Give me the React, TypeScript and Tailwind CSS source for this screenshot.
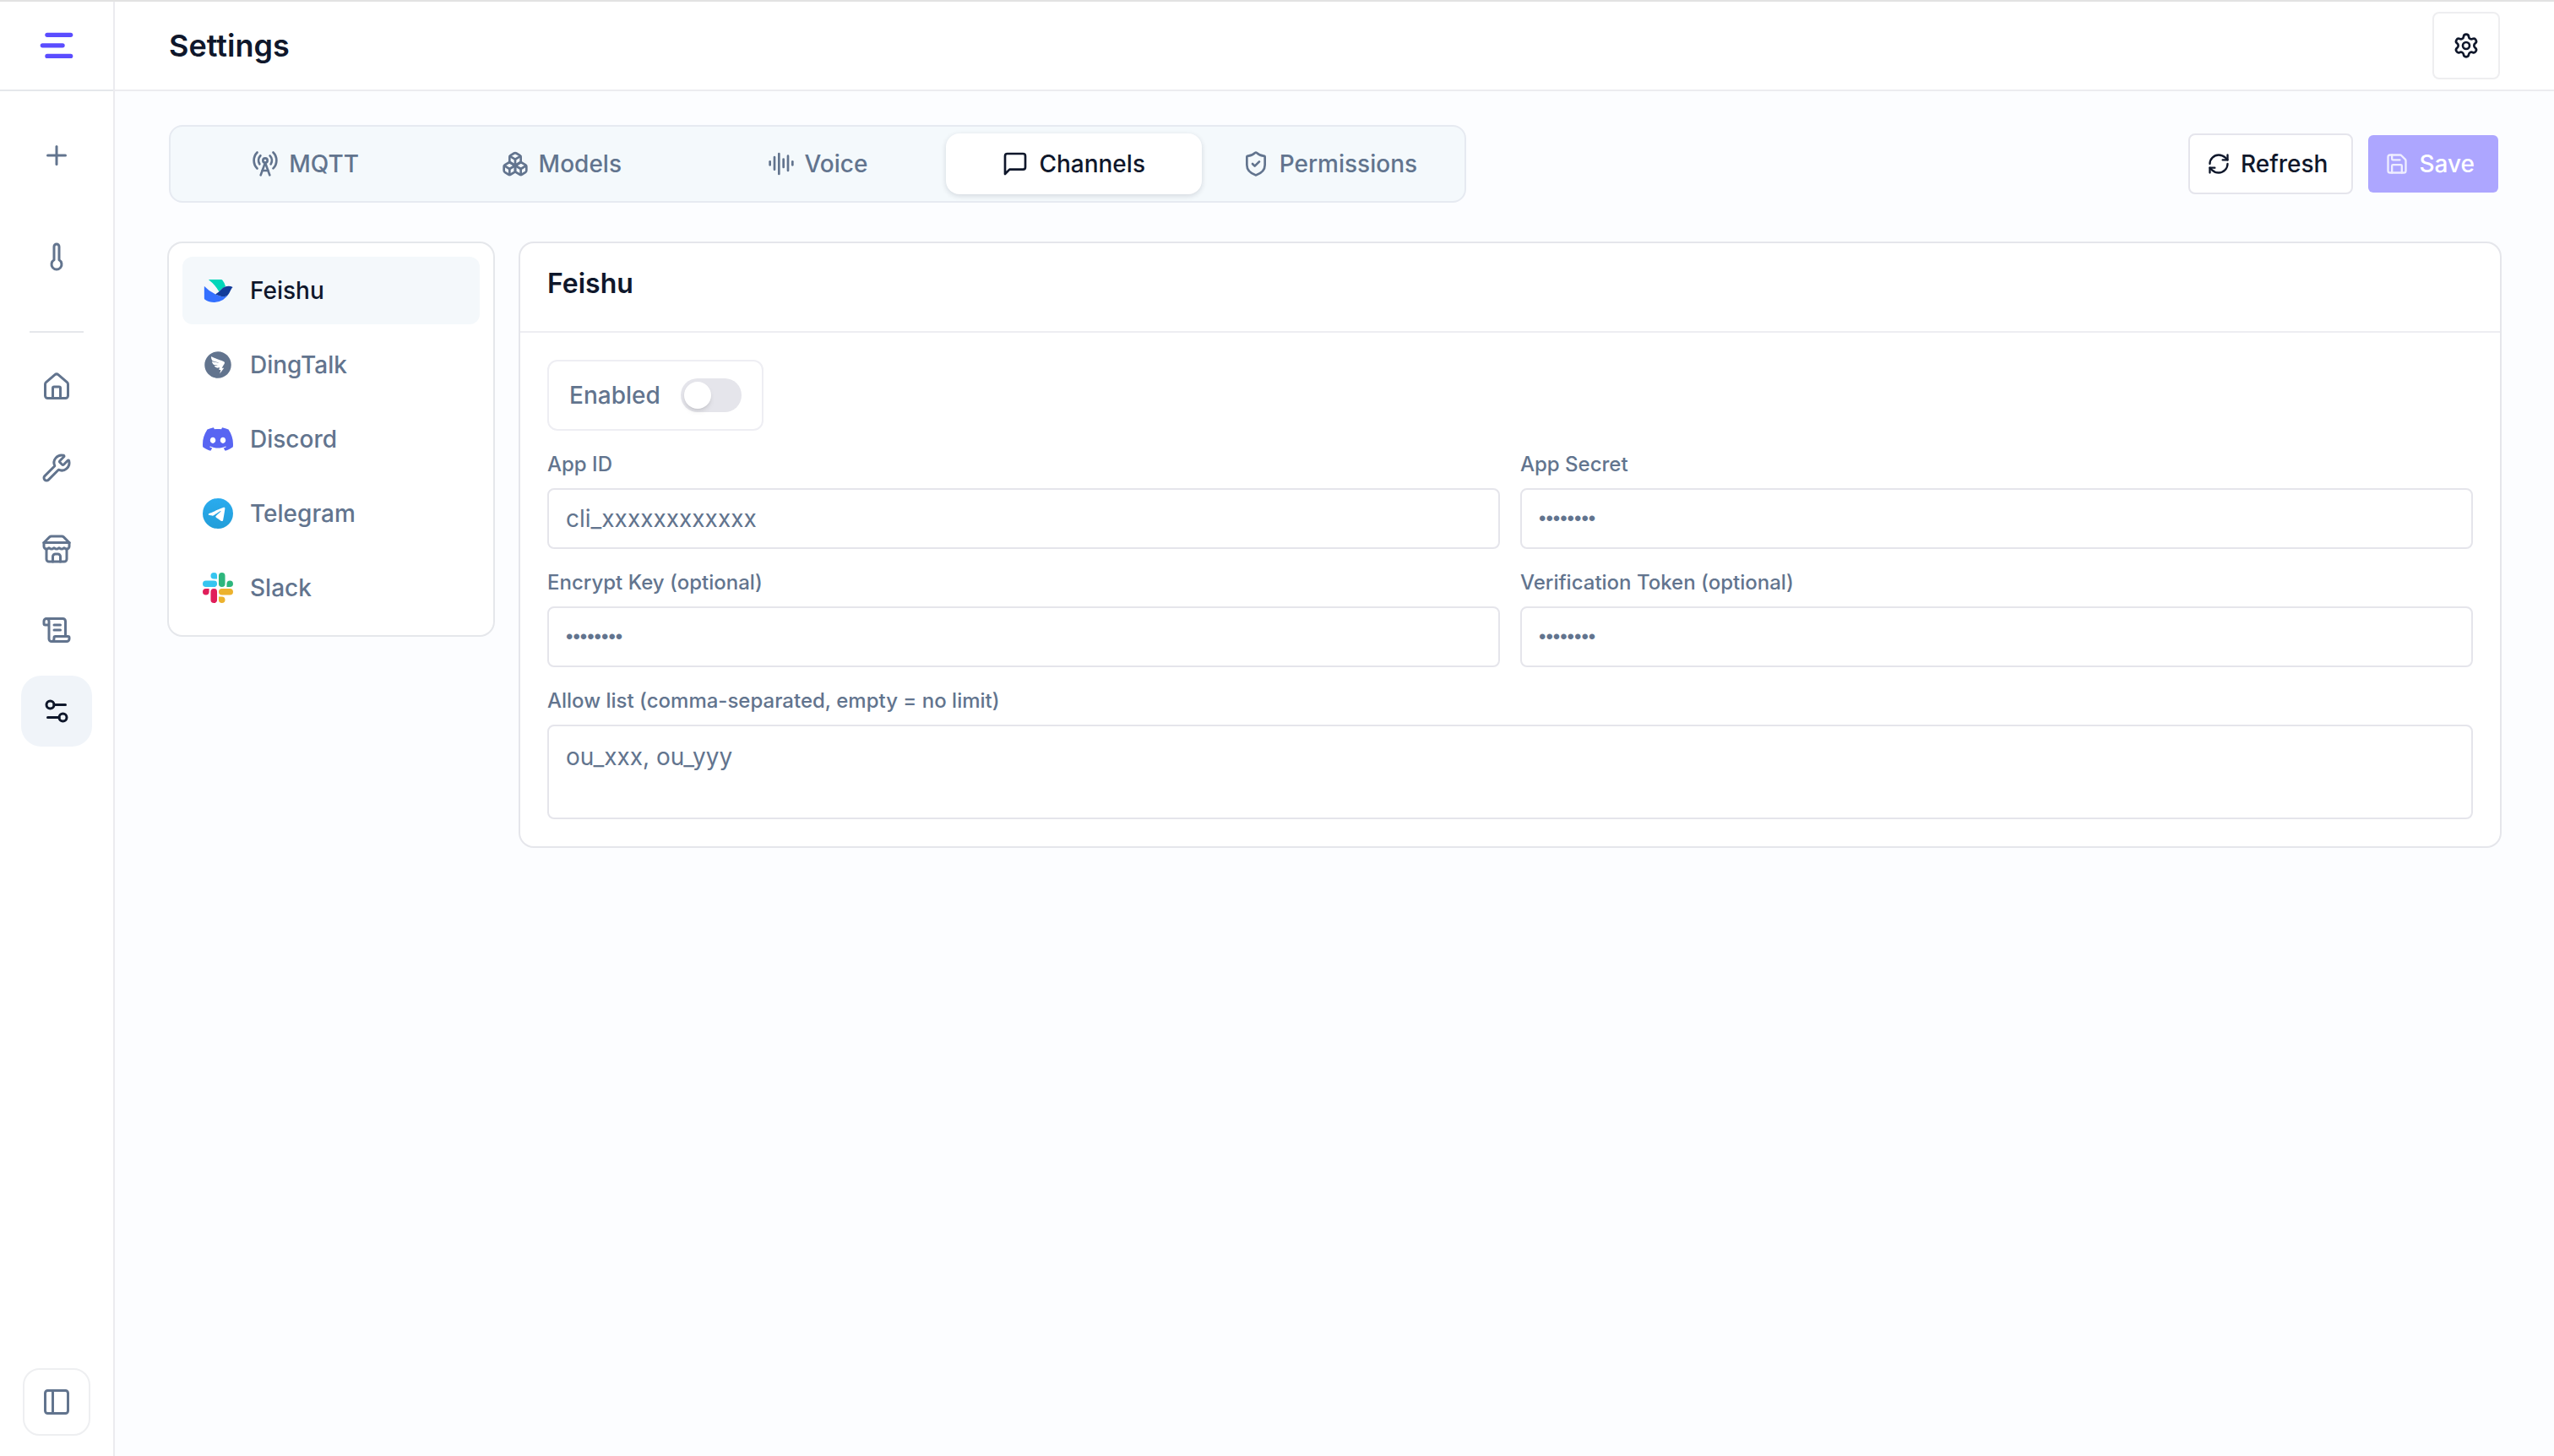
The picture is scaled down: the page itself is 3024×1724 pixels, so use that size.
import { useState } from "react"
import type { ReactNode } from "react"
import {
  AudioLines,
  Boxes,
  House,
  PanelLeft,
  Plus,
  RadioTower,
  RefreshCw,
  Save,
  ScrollText,
  Settings,
  Settings2,
  ShieldCheck,
  Thermometer,
  Wrench,
} from "lucide-react"
import { AiFillDingtalkCircle } from "react-icons/ai"
import { SiDiscord } from "react-icons/si"

const StoreIcon = () => (
  <svg
    viewBox="0 0 24 24"
    className="size-9"
    fill="none"
    stroke="currentColor"
    strokeWidth="2"
    strokeLinecap="round"
    strokeLinejoin="round"
  >
    <path d="m2 7 4.41-4.41A2 2 0 0 1 7.83 2h8.34a2 2 0 0 1 1.42.59L22 7" />
    <path d="M4 12v8a2 2 0 0 0 2 2h12a2 2 0 0 0 2-2v-8" />
    <path d="M15 22v-4a2 2 0 0 0-2-2h-2a2 2 0 0 0-2 2v4" />
    <path d="M2 7h20" />
    <path d="M22 7v3a2 2 0 0 1-2 2a2.7 2.7 0 0 1-1.59-.63.7.7 0 0 0-.82 0A2.7 2.7 0 0 1 16 12a2.7 2.7 0 0 1-1.59-.63.7.7 0 0 0-.82 0A2.7 2.7 0 0 1 12 12a2.7 2.7 0 0 1-1.59-.63.7.7 0 0 0-.82 0A2.7 2.7 0 0 1 8 12a2.7 2.7 0 0 1-1.59-.63.7.7 0 0 0-.82 0A2.7 2.7 0 0 1 4 12a2 2 0 0 1-2-2V7" />
  </svg>
)

const MessageIcon = () => (
  <svg
    viewBox="0 0 24 24"
    className="size-8"
    fill="none"
    stroke="currentColor"
    strokeWidth="2"
    strokeLinecap="round"
    strokeLinejoin="round"
  >
    <path d="M21 15a2 2 0 0 1-2 2H7l-4 4V5a2 2 0 0 1 2-2h14a2 2 0 0 1 2 2z" />
  </svg>
)

const Logo = () => (
  <svg viewBox="0 0 40 32" className="h-8 w-10" fill="#5b4dff">
    <rect x="6.3" y="0.7" width="33" height="5.2" rx="2.6" />
    <rect x="0.7" y="13.2" width="29" height="5.2" rx="2.6" />
    <rect x="6.3" y="25.8" width="33" height="5.2" rx="2.6" />
  </svg>
)

const FeishuIcon = () => (
  <svg viewBox="0 0 24 24" className="size-9">
    <path
      fill="#00D6B9"
      d="M12.924 12.803l.056-.054c.038-.034.076-.072.11-.11l.077-.076.23-.227 1.334-1.319.335-.331c.063-.063.13-.123.195-.183a7.777 7.777 0 011.823-1.24 7.607 7.607 0 011.014-.4 13.177 13.177 0 00-2.5-5.013 1.203 1.203 0 00-.94-.448h-9.65c-.173 0-.246.224-.107.325a28.23 28.23 0 018 9.098c.007-.006.016-.013.023-.022z"
    />
    <path
      fill="#3370FF"
      d="M9.097 21.299a13.258 13.258 0 0011.82-7.247 5.576 5.576 0 01-.731 1.076 5.315 5.315 0 01-.745.7 5.117 5.117 0 01-.615.404 4.626 4.626 0 01-.726.331 5.312 5.312 0 01-1.883.312 5.892 5.892 0 01-.524-.031 6.509 6.509 0 01-.729-.126c-.06-.016-.12-.029-.18-.044-.166-.044-.33-.092-.494-.14-.082-.024-.164-.046-.246-.072-.123-.038-.247-.072-.366-.11l-.3-.095-.284-.094-.192-.067c-.08-.025-.155-.053-.234-.082a3.49 3.49 0 01-.167-.06c-.11-.04-.221-.079-.328-.12-.063-.025-.126-.047-.19-.072l-.252-.098c-.088-.035-.18-.07-.268-.107l-.174-.07c-.072-.028-.141-.06-.214-.088l-.164-.07c-.057-.024-.114-.05-.17-.075l-.149-.066-.135-.06-.14-.063a90.183 90.183 0 01-.141-.066 4.808 4.808 0 00-.18-.083c-.063-.028-.123-.06-.186-.088a5.697 5.697 0 01-.199-.098 27.762 27.762 0 01-8.067-5.969.18.18 0 00-.312.123l.006 9.21c0 .4.199.779.533 1a13.177 13.177 0 007.326 2.205z"
    />
    <path
      fill="#133C9A"
      d="M23.732 9.295a7.55 7.55 0 00-3.35-.776 7.521 7.521 0 00-2.284.35c-.054.016-.107.035-.158.05a8.297 8.297 0 00-.855.35 7.14 7.14 0 00-.552.297 6.716 6.716 0 00-.533.347c-.123.089-.243.18-.363.275-.13.104-.252.211-.375.321-.067.06-.13.123-.196.184l-.334.328-1.338 1.321-.23.228-.076.075c-.038.038-.076.073-.11.11l-.057.054a1.914 1.914 0 01-.085.08c-.032.028-.063.06-.095.088a13.286 13.286 0 01-2.748 1.946c.06.028.12.057.18.082l.142.066c.044.022.091.041.139.063l.135.06.149.067.17.075.164.07c.073.031.142.06.215.088.056.025.116.047.173.07.088.034.177.072.268.107.085.031.168.066.253.098l.189.072c.11.041.218.082.328.12.057.019.11.041.167.06.08.028.155.053.234.082l.192.066.284.095.3.095c.123.037.243.075.366.11l.246.072c.164.048.331.095.495.14.06.015.12.03.18.043.114.029.227.05.34.07.13.022.26.04.389.057a5.815 5.815 0 00.994.019 5.172 5.172 0 001.413-.3 5.405 5.405 0 00.726-.334c.06-.035.122-.07.182-.108a7.96 7.96 0 00.432-.297 5.362 5.362 0 00.577-.517 5.285 5.285 0 00.37-.429 5.797 5.797 0 00.527-.827l.13-.258 1.166-2.325-.003.006a7.391 7.391 0 011.527-2.186z"
    />
  </svg>
)

const TelegramIcon = () => (
  <svg viewBox="0 0 24 24" className="size-9">
    <defs>
      <linearGradient id="telegram" x1="0" y1="0" x2="0" y2="1">
        <stop offset="0" stopColor="#2AABEE" />
        <stop offset="1" stopColor="#229ED9" />
      </linearGradient>
    </defs>
    <circle cx="12" cy="12" r="12" fill="url(#telegram)" />
    <path
      fill="#fff"
      d="M16.906 7.224c.1-.002.321.023.465.14a.506.506 0 0 1 .171.325c.016.093.036.306.02.472-.18 1.898-.962 6.502-1.36 8.627-.168.9-.499 1.201-.82 1.23-.696.065-1.225-.46-1.9-.902-1.056-.693-1.653-1.124-2.678-1.8-1.185-.78-.417-1.21.258-1.91.177-.184 3.247-2.977 3.307-3.23.007-.032.014-.15-.056-.212s-.174-.041-.249-.024c-.106.024-1.793 1.14-5.061 3.345-.48.33-.913.49-1.302.48-.428-.008-1.252-.241-1.865-.44-.752-.245-1.349-.374-1.297-.789.027-.216.325-.437.893-.663 3.498-1.524 5.83-2.529 6.998-3.014 3.332-1.386 4.025-1.627 4.476-1.635z"
    />
  </svg>
)

const SlackIcon = () => (
  <svg viewBox="0 0 24 24" className="size-9">
    <path
      fill="#E01E5A"
      d="M5.042 15.165a2.528 2.528 0 0 1-2.52 2.523A2.528 2.528 0 0 1 0 15.165a2.527 2.527 0 0 1 2.522-2.52h2.52v2.52zM6.313 15.165a2.527 2.527 0 0 1 2.521-2.52 2.527 2.527 0 0 1 2.521 2.52v6.313A2.528 2.528 0 0 1 8.834 24a2.528 2.528 0 0 1-2.521-2.522v-6.313z"
    />
    <path
      fill="#36C5F0"
      d="M8.834 5.042a2.528 2.528 0 0 1-2.521-2.52A2.528 2.528 0 0 1 8.834 0a2.528 2.528 0 0 1 2.521 2.522v2.52H8.834zM8.834 6.313a2.528 2.528 0 0 1 2.521 2.521 2.528 2.528 0 0 1-2.521 2.521H2.522A2.528 2.528 0 0 1 0 8.834a2.528 2.528 0 0 1 2.522-2.521h6.312z"
    />
    <path
      fill="#2EB67D"
      d="M18.956 8.834a2.528 2.528 0 0 1 2.522-2.521A2.528 2.528 0 0 1 24 8.834a2.528 2.528 0 0 1-2.522 2.521h-2.522V8.834zM17.688 8.834a2.528 2.528 0 0 1-2.523 2.521 2.527 2.527 0 0 1-2.52-2.521V2.522A2.527 2.527 0 0 1 15.165 0a2.528 2.528 0 0 1 2.523 2.522v6.312z"
    />
    <path
      fill="#ECB22E"
      d="M15.165 18.956a2.528 2.528 0 0 1 2.523 2.522A2.528 2.528 0 0 1 15.165 24a2.527 2.527 0 0 1-2.52-2.522v-2.522h2.52zM15.165 17.688a2.527 2.527 0 0 1-2.52-2.523 2.526 2.526 0 0 1 2.52-2.52h6.313A2.527 2.527 0 0 1 24 15.165a2.528 2.528 0 0 1-2.522 2.523h-6.313z"
    />
  </svg>
)

const navItems = [
  { name: "Home", icon: <House className="size-9" /> },
  { name: "Tools", icon: <Wrench className="size-9" /> },
  { name: "Store", icon: <StoreIcon /> },
  { name: "Logs", icon: <ScrollText className="size-9" /> },
  { name: "Settings", icon: <Settings2 className="size-9" />, active: true },
]

const tabs = [
  { name: "MQTT", icon: <RadioTower className="size-8" /> },
  { name: "Models", icon: <Boxes className="size-8" /> },
  { name: "Voice", icon: <AudioLines className="size-8" /> },
  { name: "Channels", icon: <MessageIcon /> },
  { name: "Permissions", icon: <ShieldCheck className="size-8" /> },
]

const channels = [
  { name: "Feishu", icon: <FeishuIcon /> },
  { name: "DingTalk", icon: <AiFillDingtalkCircle className="size-9" /> },
  { name: "Discord", icon: <SiDiscord className="size-9 text-[#5865F2]" /> },
  { name: "Telegram", icon: <TelegramIcon /> },
  { name: "Slack", icon: <SlackIcon /> },
]

const fields = [
  { id: "appId", label: "App ID", type: "text", placeholder: "cli_xxxxxxxxxxxx" },
  { id: "appSecret", label: "App Secret", type: "password", placeholder: "••••••••" },
  { id: "encryptKey", label: "Encrypt Key (optional)", type: "password", placeholder: "••••••••" },
  { id: "token", label: "Verification Token (optional)", type: "password", placeholder: "••••••••" },
]

const NavButton = ({
  name,
  active,
  children,
}: {
  name: string
  active?: boolean
  children: ReactNode
}) => (
  <button
    aria-label={name}
    className={
      active
        ? "flex size-21 items-center justify-center rounded-3xl bg-[#f0f4f9] text-slate-900"
        : "flex size-21 items-center justify-center rounded-3xl text-slate-500"
    }
  >
    {children}
  </button>
)

const Sidebar = () => (
  <aside className="flex w-34 shrink-0 flex-col items-center border-r-2 border-[#ebebef] bg-white">
    <div className="flex h-[106px] w-full items-center justify-center border-b-2 border-[#e5e7eb]">
      <Logo />
    </div>
    <div className="flex flex-col items-center gap-9 pt-[34px]">
      <NavButton name="New">
        <Plus className="size-9" />
      </NavButton>
      <NavButton name="Temperature">
        <Thermometer className="size-9" />
      </NavButton>
    </div>
    <hr className="mt-[46px] w-16 border-t-2 border-[#e5e7eb]" />
    <nav className="mt-[22px] flex flex-col gap-3">
      {navItems.map((item) => (
        <NavButton key={item.name} name={item.name} active={item.active}>
          {item.icon}
        </NavButton>
      ))}
    </nav>
    <button
      aria-label="Toggle sidebar"
      className="mt-auto mb-6 flex size-20 items-center justify-center rounded-[20px] border-2 border-[#eeeff1] text-slate-500"
    >
      <PanelLeft className="size-9" />
    </button>
  </aside>
)

const App = () => {
  const [tab, setTab] = useState("Channels")
  const [channel, setChannel] = useState("Feishu")
  const [enabled, setEnabled] = useState(false)

  return (
    <div className="flex min-h-screen border-t-2 border-[#e2e2e2] bg-[#fcfdff] font-['Inter','Liberation_Sans',sans-serif] text-slate-900">
      <Sidebar />
      <div className="flex min-w-0 flex-1 flex-col">
        <header className="flex h-[106px] items-center justify-between border-b-2 border-[#ececf0] bg-white px-16">
          <h1 className="text-[36px] leading-12 font-semibold">Settings</h1>
          <button
            aria-label="Preferences"
            className="flex size-20 items-center justify-center rounded-lg border-2 border-[#eeeef0] bg-white"
          >
            <Settings className="size-8" />
          </button>
        </header>

        <main className="flex flex-col gap-12 px-16 pt-10 pb-16">
          <div className="flex items-center justify-between gap-8">
            <div
              role="tablist"
              className="grid w-full max-w-[1536px] grid-cols-5 rounded-2xl border-2 border-[#e6eaf1] bg-[#f4f9fc] p-2"
            >
              {tabs.map(({ name, icon }) => (
                <button
                  key={name}
                  role="tab"
                  aria-selected={tab === name}
                  onClick={() => setTab(name)}
                  className={
                    tab === name
                      ? "flex h-18 items-center justify-center gap-3 rounded-2xl bg-white text-[28px] leading-10 font-medium text-slate-900 shadow-[0_2px_6px_rgba(15,23,42,0.14)]"
                      : "flex h-18 items-center justify-center gap-3 rounded-2xl text-[28px] leading-10 font-medium text-slate-500"
                  }
                >
                  {icon}
                  {name}
                </button>
              ))}
            </div>
            <div className="flex shrink-0 gap-4">
              <button className="flex h-18 items-center gap-3 rounded-lg border-2 border-[#e5e5ec] bg-white pr-7 pl-5 text-[28px] leading-10 font-medium">
                <RefreshCw className="size-7" />
                Refresh
              </button>
              <button className="flex h-18 items-center gap-3 rounded-lg border-2 border-transparent bg-[#ada6ff] bg-clip-padding pr-7 pl-5 text-[28px] leading-10 font-medium text-white">
                <Save className="size-7 opacity-80" />
                Save
              </button>
            </div>
          </div>

          <div className="flex items-start gap-8">
            <div className="flex w-96 shrink-0 flex-col gap-2 rounded-2xl bg-white p-4 ring-2 ring-[#e5e7eb]">
              {channels.map(({ name, icon }) => (
                <button
                  key={name}
                  onClick={() => setChannel(name)}
                  className={
                    channel === name
                      ? "flex h-20 items-center gap-5 rounded-xl bg-[#f4f8fb] px-6 text-[28px] leading-10 font-medium text-slate-900"
                      : "flex h-20 items-center gap-5 rounded-xl px-6 text-[28px] leading-10 font-medium text-slate-500"
                  }
                >
                  {icon}
                  {name}
                </button>
              ))}
            </div>

            <section className="min-w-0 flex-1 rounded-2xl bg-white ring-2 ring-[#e5e6eb]">
              <div className="border-b-2 border-[#ededf2] px-8 pt-[26px] pb-[34px]">
                <h2 className="text-[32px] leading-11 font-semibold">{channel}</h2>
              </div>
              <form className="flex flex-col gap-6 p-8">
                <label className="flex h-21 items-center gap-6 self-start rounded-xl border-2 border-[#eeeef3] px-6 text-[28px] leading-10 font-medium text-slate-500">
                  Enabled
                  <input
                    type="checkbox"
                    role="switch"
                    checked={enabled}
                    onChange={(e) => setEnabled(e.target.checked)}
                    className="flex h-10 w-18 appearance-none items-center rounded-full bg-[#e5e5eb] px-1 before:size-8 before:rounded-full before:bg-white before:shadow-md checked:justify-end checked:bg-[#5b4dff]"
                  />
                </label>
                <div className="grid grid-cols-2 gap-6">
                  {fields.map((field) => (
                    <div key={field.id} className="flex flex-col gap-3">
                      <label
                        htmlFor={field.id}
                        className="text-[24px] leading-8 font-medium text-slate-500"
                      >
                        {field.label}
                      </label>
                      <input
                        id={field.id}
                        type={field.type}
                        placeholder={field.placeholder}
                        className={
                          field.type === "password"
                            ? "h-18 rounded-lg border-2 border-[#e5e5eb] px-5 font-['Liberation_Sans',sans-serif] text-[24px] placeholder:text-slate-500"
                            : "h-18 rounded-lg border-2 border-[#e5e5eb] px-5 text-[28px] placeholder:text-slate-500"
                        }
                      />
                    </div>
                  ))}
                </div>
                <div className="flex flex-col gap-3">
                  <label
                    htmlFor="allowList"
                    className="text-[24px] leading-8 font-medium text-slate-500"
                  >
                    Allow list (comma-separated, empty = no limit)
                  </label>
                  <textarea
                    id="allowList"
                    placeholder="ou_xxx, ou_yyy"
                    className="h-28 resize-none rounded-lg border-2 border-[#e5e5eb] px-5 py-4 text-[28px] leading-10 placeholder:text-slate-500"
                  />
                </div>
              </form>
            </section>
          </div>
        </main>
      </div>
    </div>
  )
}

export default App
